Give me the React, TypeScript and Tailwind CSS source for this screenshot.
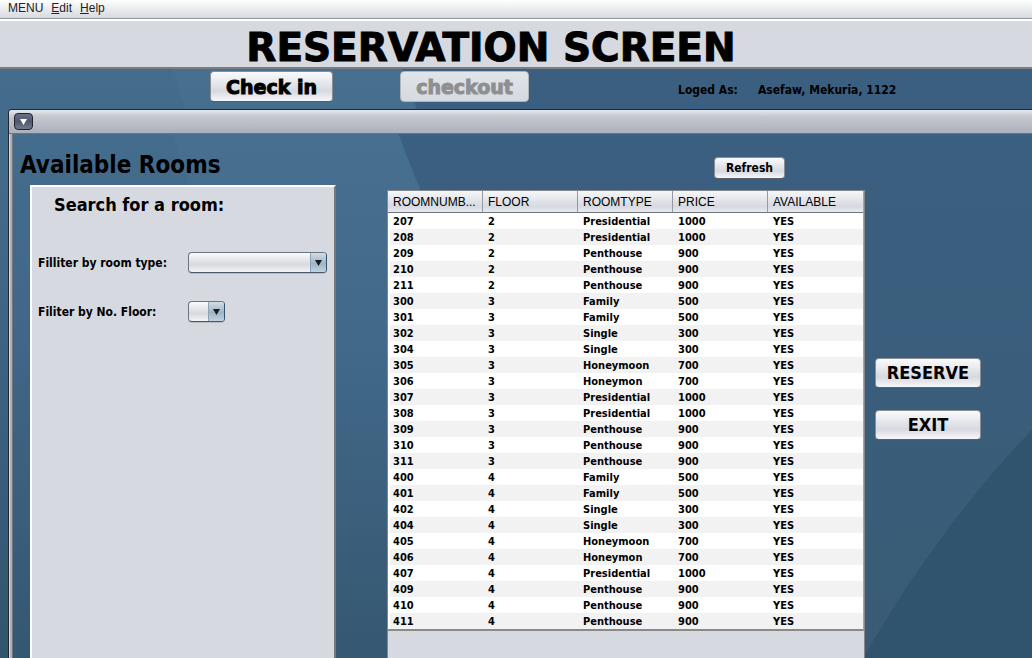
import React from "react";

type Room = [string, string, string, string];

const rooms: Room[] = [
  ["207", "2", "Presidential", "1000"],
  ["208", "2", "Presidential", "1000"],
  ["209", "2", "Penthouse", "900"],
  ["210", "2", "Penthouse", "900"],
  ["211", "2", "Penthouse", "900"],
  ["300", "3", "Family", "500"],
  ["301", "3", "Family", "500"],
  ["302", "3", "Single", "300"],
  ["304", "3", "Single", "300"],
  ["305", "3", "Honeymoon", "700"],
  ["306", "3", "Honeymon", "700"],
  ["307", "3", "Presidential", "1000"],
  ["308", "3", "Presidential", "1000"],
  ["309", "3", "Penthouse", "900"],
  ["310", "3", "Penthouse", "900"],
  ["311", "3", "Penthouse", "900"],
  ["400", "4", "Family", "500"],
  ["401", "4", "Family", "500"],
  ["402", "4", "Single", "300"],
  ["404", "4", "Single", "300"],
  ["405", "4", "Honeymoon", "700"],
  ["406", "4", "Honeymon", "700"],
  ["407", "4", "Presidential", "1000"],
  ["409", "4", "Penthouse", "900"],
  ["410", "4", "Penthouse", "900"],
  ["411", "4", "Penthouse", "900"],
];

const glossy =
  "rounded-[4px] border border-[#8b8d94] border-b-[#5d5f66] bg-linear-to-b from-[#fafbfc] via-[#d6d9df] via-65% to-[#f6f7fb] text-black";

/* Blue desktop wallpaper, anchored to the top left of its container. */
function Wallpaper({ id, shift }: { id: string; shift: number }) {
  return (
    <svg
      aria-hidden="true"
      className="absolute inset-0 h-full w-full"
      viewBox="0 0 1020 589"
      preserveAspectRatio="xMinYMin slice"
    >
      <defs>
        <linearGradient id={id + "-light"} x1="0" y1="0" x2="0" y2="1">
          <stop offset="0" stopColor="#476f90" />
          <stop offset="0.35" stopColor="#42698a" />
          <stop offset="1" stopColor="#33546c" />
        </linearGradient>
        <linearGradient id={id + "-mid"} x1="0" y1="0" x2="0" y2="1">
          <stop offset="0" stopColor="#3a5f80" />
          <stop offset="1" stopColor="#395b74" />
        </linearGradient>
      </defs>
      <rect width="1020" height="589" fill={`url(#${id}-light)`} />
      <g transform={`translate(${shift} 0)`}>
        <path d="M160 0 Q185 90 230 180 L330 589 H-20 V0Z" fill="#345a78" opacity="0.1" />
        <path d="M386 0 Q400 40 423 90 L620 589 H1040 V0Z" fill={`url(#${id}-mid)`} />
        <path d="M1020 296 Q925 395 849 528 L820 589 H1040 V276Z" fill="#31546e" />
      </g>
    </svg>
  );
}

function Combo({ id, label, options, width }: { id: string; label: string; options: string[]; width: string }) {
  return (
    <div className="flex h-[21px] items-center">
      <label htmlFor={id} className="w-[150px] text-xs leading-4 whitespace-nowrap">
        {label}
      </label>
      <div className={"relative flex h-[21px] overflow-hidden rounded-[4px] border border-[#6d7480] border-r-[#34506b] border-b-[#46586c] bg-linear-to-b from-[#fafbfc] via-[#d6d9df] via-60% to-[#f3f4f8] shadow-[0_1px_0_#b9bcc3] " + width}>
        <select id={id} defaultValue="" className="h-full w-full appearance-none bg-transparent px-1 text-xs outline-none">
          <option value=""></option>
          {options.map((o) => (
            <option key={o}>{o}</option>
          ))}
        </select>
        <span className="pointer-events-none absolute inset-y-0 right-0 flex w-4 items-center justify-center border-l border-[#8da2b5] bg-linear-to-b from-[#d3dde6] via-[#9fb4c7] via-55% to-[#c0d3e3]">
          <svg width="7" height="6" viewBox="0 0 7 6" aria-hidden="true">
            <path d="M0 0H7L3.5 6Z" fill="#1a1c20" />
          </svg>
        </span>
      </div>
    </div>
  );
}

export default function App() {
  return (
    <div className="flex min-h-screen flex-col bg-[#3a5f80] font-['DejaVu_Sans_Condensed','DejaVu_Sans',sans-serif] font-bold text-black">
      <nav className="flex h-[19px] gap-2 border-b border-[#9297a1] bg-linear-to-b from-white to-[#d6d9df] pl-2 font-['Liberation_Sans',Arial,sans-serif] text-xs font-normal leading-4 text-[#222]">
        <button type="button" className="pb-[3px]">MENU</button>
        <button type="button" className="pb-[3px]"><span className="underline">E</span>dit</button>
        <button type="button" className="pb-[3px]"><span className="underline">H</span>elp</button>
      </nav>

      <header className="flex h-[50px] justify-center border-t-2 border-b-2 border-t-white border-b-[#7d7d80] bg-[#d6d9df] pr-[50px]">
        <h1 className="font-['DejaVu_Sans',sans-serif] text-[39px] font-bold leading-[54px] whitespace-nowrap [-webkit-text-stroke:1px_black]">RESERVATION SCREEN</h1>
      </header>

      <main className="relative flex flex-1 flex-col">
        <Wallpaper id="outer" shift={11} />
        <div className="relative flex h-10 items-start pt-[2px] pl-[210px]">
          <button type="button" className={"h-[31px] w-[123px] font-['DejaVu_Sans',sans-serif] text-[19px] font-bold leading-6 [-webkit-text-stroke:1px_black] " + glossy}>
            Check in
          </button>
          <button
            type="button"
            disabled
            className="ml-[67px] h-[31px] w-[129px] rounded-[4px] border border-[#b2b5bc] bg-linear-to-b from-[#e1e4e9] to-[#d6d9df] font-['DejaVu_Sans',sans-serif] text-[19px] font-bold leading-6 text-[#8e8f91] [-webkit-text-stroke:1px_#8e8f91]"
          >
            checkout
          </button>
          <p className="ml-[149px] flex pt-[11px] text-xs leading-4 whitespace-nowrap">
            <span className="w-20">Loged As:</span>
            <span>Asefaw, Mekuria, 1122</span>
          </p>
        </div>

        <section className="relative ml-2 flex flex-1 flex-col rounded-tl-[4px] border-t border-l border-[#23262d] bg-[#abb0ba]">
          <div className="flex h-6 items-center rounded-tl-[3px] border-b border-b-[#6f747d] bg-linear-to-b from-[#e6e8ec] via-[#c3c7cf] via-30% to-[#abb0ba] pl-[5px]">
            <button
              type="button"
              aria-label="Window menu"
              className="flex h-[17px] w-[19px] items-center justify-center rounded-[4px] border border-[#1f2430] bg-linear-to-b from-[#687084] via-[#4f586c] to-[#727b8e]"
            >
              <svg width="7" height="6" viewBox="0 0 7 6" aria-hidden="true">
                <path d="M0 0H7L3.5 6Z" fill="#fff" />
              </svg>
            </button>
          </div>

          <div className="flex flex-1 flex-col border-l border-[#d9dce2] pl-[2px]">
            <div className="relative flex flex-1 border-l border-[#6f747d]">
              <Wallpaper id="inner" shift={0} />
              <div className="relative flex w-[323px] flex-col pt-[13px] pl-[7px]">
                <h2 className="pb-[2px] text-2xl leading-9 whitespace-nowrap">Available Rooms</h2>
                <div className="ml-[10px] flex flex-1 flex-col border-t-2 border-r-2 border-l-2 border-t-white border-r-[#77777a] border-l-white bg-[#d6d9df] pl-[6px]">
                  <h3 className="mb-9 ml-4 pt-[6px] text-lg leading-[23px] whitespace-nowrap">Search for a room:</h3>
                  <div className="flex flex-col gap-7">
                    <Combo id="type" label="Filliter by room type:" width="w-[139px]" options={["Single", "Family", "Honeymoon", "Penthouse", "Presidential"]} />
                    <Combo id="floor" label="Filiter by No. Floor:" width="w-[37px]" options={["2", "3", "4"]} />
                  </div>
                </div>
              </div>

              <div className="relative ml-[51px] flex flex-1 flex-col pt-[23px]">
                <div className="mb-[11px] flex justify-end pr-20">
                  <button type="button" className={"h-[22px] w-[71px] text-xs " + glossy}>
                    Refresh
                  </button>
                </div>
                <div className="flex-1 border-t border-r border-l border-[#85878d] bg-[#d6d9df]">
                  <div className="border-r border-b-2 border-r-[#a5a5a2] border-b-[#8a8a88] bg-white">
                    <table className="w-full table-fixed border-separate border-spacing-0 text-left text-[11px] leading-[15px]">
                      <thead>
                        <tr className="h-[22px] bg-linear-to-b from-[#f6f7f9] via-[#d6d9df] via-70% to-[#eceef4] font-['Liberation_Sans',Arial,sans-serif] text-xs leading-4">
                          {["ROOMNUMB...", "FLOOR", "ROOMTYPE", "PRICE", "AVAILABLE"].map((h) => (
                            <th key={h} className="overflow-hidden border-r border-b border-r-[#96999f] border-b-[#6f737c] p-0 pl-[5px] font-normal whitespace-nowrap last:border-r-0">
                              {h}
                            </th>
                          ))}
                        </tr>
                      </thead>
                      <tbody>
                        {rooms.map((r) => (
                          <tr key={r[0]} className="even:bg-[#f2f2f2]">
                            {[...r, "YES"].map((c, i) => (
                              <td key={i} className="p-0 pt-px pl-[5px] first:border-l-2 first:border-white first:pl-[3px]">
                                {c}
                              </td>
                            ))}
                          </tr>
                        ))}
                      </tbody>
                    </table>
                  </div>
                </div>
              </div>

              <div className="relative flex w-[167px] flex-col gap-[22px] pt-56 pl-[10px]">
                <button type="button" className={"h-[30px] w-[106px] text-lg leading-5 " + glossy}>
                  RESERVE
                </button>
                <button type="button" className={"h-[30px] w-[106px] text-lg leading-5 " + glossy}>
                  EXIT
                </button>
              </div>
            </div>
          </div>
        </section>
      </main>
    </div>
  );
}
